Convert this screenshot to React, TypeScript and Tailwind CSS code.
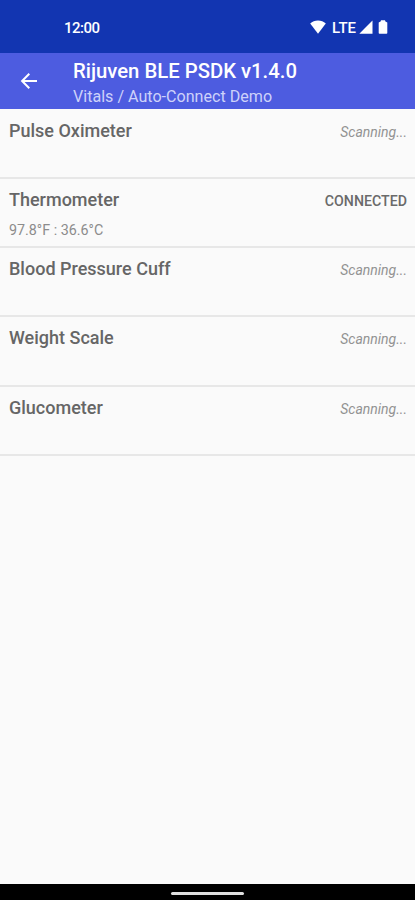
import React from "react";

interface Device {
  name: string;
  connected: boolean;
  reading?: string;
}

const devices: Device[] = [
  { name: "Pulse Oximeter", connected: false },
  { name: "Thermometer", connected: true, reading: "97.8°F : 36.6°C" },
  { name: "Blood Pressure Cuff", connected: false },
  { name: "Weight Scale", connected: false },
  { name: "Glucometer", connected: false },
];

const StatusBar = () => (
  <div className="flex h-[53px] shrink-0 items-center justify-between bg-[#1235b1] pr-[27px] pl-16 text-white">
    <span className="pt-0.5 text-[15px] leading-5 font-medium tracking-[-0.5px]">12:00</span>
    <div className="flex items-center pt-px">
      <svg className="h-[14px] w-4" viewBox="0 0 16 14" fill="currentColor">
        <path d="M8 13.700 0.200 3.500C2.300 1.500 5 0.500 8 0.500s5.700 1 7.800 3z" />
      </svg>
      <span className="ml-[6px] pt-px text-[15px] leading-5 font-medium">LTE</span>
      <svg className="ml-[3px] h-[14px] w-[14px]" viewBox="0 0 14 14" fill="currentColor">
        <path d="M13.500 0.500v13.200H0.300z" />
      </svg>
      <svg className="ml-[5px] h-[14px] w-[10px]" viewBox="0 0 10 14" fill="currentColor">
        <path d="M3 0.200h4L7.400 1.500 9.300 2.500v10.500c0 .4-.3.8-.8.8h-7c-.5 0-.8-.4-.8-.8V2.500L2.600 1.500z" />
      </svg>
    </div>
  </div>
);

const AppBar = () => (
  <header className="flex h-14 shrink-0 items-center bg-[#4d5ce0] pl-5 text-white">
    <button aria-label="Back">
      <svg className="h-[18px] w-[18px]" viewBox="0 0 18 18" fill="none" stroke="currentColor" strokeWidth="2">
        <path d="M17 9H2.500M9.300 1.800 2.100 9l7.200 7.200" />
      </svg>
    </button>
    <div className="ml-[35px] pt-[5px] whitespace-nowrap">
      <h1 className="text-[20.3px] leading-6 font-medium">Rijuven BLE PSDK v1.4.0</h1>
      <p className="pt-0.5 text-[16.1px] leading-6 text-[#cdd2fa]">Vitals / Auto-Connect Demo</p>
    </div>
  </header>
);

const DeviceRow = ({ device }: { device: Device }) => (
  <li className="h-[69.25px] border-b-2 border-[#e7e7e7] pt-[10px] pr-2 pl-[9px]">
    <div className="flex items-center justify-between">
      <h2 className="text-[18px] leading-[22px] font-medium text-[#666]">{device.name}</h2>
      {device.connected ? (
        <span className="pt-0.5 text-[14.2px] leading-5 font-medium text-[#6a6a6a]">CONNECTED</span>
      ) : (
        <span className="pt-0.5 text-sm leading-5 text-[#929292] italic">Scanning...</span>
      )}
    </div>
    {device.reading && (
      <p className="pt-[9px] text-[14.3px] leading-5 text-[#8c8c8c]">{device.reading}</p>
    )}
  </li>
);

const App = () => {
  return (
    <div className="flex h-screen flex-col overflow-hidden bg-[#fafafa] font-['Roboto',sans-serif]">
      <StatusBar />
      <AppBar />
      <ul className="flex-1 pt-[0.5px]">
        {devices.map((device) => (
          <DeviceRow key={device.name} device={device} />
        ))}
      </ul>
      <div className="flex h-4 shrink-0 items-center justify-center bg-black pt-0.5">
        <div className="h-[3px] w-[73px] rounded-full bg-[#e0e0e0]" />
      </div>
    </div>
  );
};

export default App;
